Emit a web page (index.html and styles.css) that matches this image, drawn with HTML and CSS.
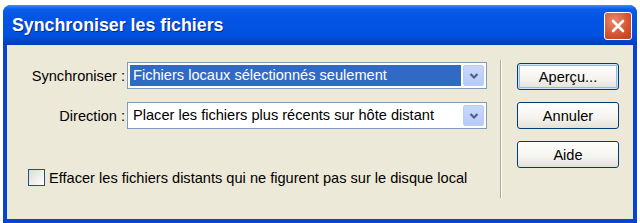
FILE: index.html
```html
<!DOCTYPE html>
<html lang="fr">
<head>
<meta charset="UTF-8" />
<title>Synchroniser les fichiers</title>
<link rel="stylesheet" href="styles.css">
</head>
<body>

<div class="window">
  <div class="titlebar">
    <span class="title">Synchroniser les fichiers</span>
    <button class="close" aria-label="Fermer">
      <svg width="16" height="16" viewBox="0 0 16 16">
        <path d="M3 3 L13 13 M13 3 L3 13" stroke="#fff" stroke-width="2.6" stroke-linecap="round" fill="none"/>
      </svg>
    </button>
  </div>

  <div class="content">
    <div class="form">
      <div class="row">
        <label class="lbl">Synchroniser :</label>
        <div class="combo">
          <span class="value selected">Fichiers locaux sélectionnés seulement</span>
          <span class="drop">
            <svg width="10" height="8" viewBox="0 0 10 8"><path d="M1.5 2 L5 5.5 L8.5 2" stroke="#4d6185" stroke-width="2.2" fill="none"/></svg>
          </span>
        </div>
      </div>
      <div class="row">
        <label class="lbl">Direction :</label>
        <div class="combo">
          <span class="value">Placer les fichiers plus récents sur hôte distant</span>
          <span class="drop">
            <svg width="10" height="8" viewBox="0 0 10 8"><path d="M1.5 2 L5 5.5 L8.5 2" stroke="#4d6185" stroke-width="2.2" fill="none"/></svg>
          </span>
        </div>
      </div>
      <div class="check">
        <span class="box"></span>
        <span>Effacer les fichiers distants qui ne figurent pas sur le disque local</span>
      </div>
    </div>

    <div class="sep"></div>

    <div class="buttons">
      <button class="btn default">Aperçu...</button>
      <button class="btn">Annuler</button>
      <button class="btn">Aide</button>
    </div>
  </div>
</div>

</body>
</html>
```

FILE: styles.css
```css
* {
  margin: 0; padding: 0; box-sizing: border-box;
}
body {
  background: #fff;
  font-family: 'Liberation Sans', Arial, sans-serif;
  font-size: 14.6px;
  color: #000;
  padding: 5px 0 0 3px;
}
.window {
  width: 634px;
  height: 218px;
  background: #0842d6;
  border-radius: 8px 8px 0 0;
  display: flex;
  flex-direction: column;
}
.titlebar {
  height: 40px;
  border-radius: 8px 8px 0 0;
  background: linear-gradient(to bottom, #3a8cf6 0px, #0a5de8 4px, #0355e6 12px, #0152e0 30px, #0044c8 37px, #003bb4 40px);
  display: flex;
  align-items: center;
  justify-content: space-between;
  padding: 0 5px 0 9px;
}
.title {
  color: #fff;
  font-weight: 700;
  font-size: 17.8px;
  text-shadow: 1px 1px 0 #0b2a8a;
  margin-top: 1px;
}
.close {
  width: 28px;
  height: 28px;
  border: 1px solid #fff;
  border-radius: 3px;
  background: radial-gradient(circle at 35% 30%, #e78a6c, #d5512e 60%, #c23d1c);
  display: flex;
  align-items: center;
  justify-content: center;
  margin-top: 2px;
}
.content {
  flex: 1;
  margin: 0 4px 4px 4px;
  background: #ece9d8;
  display: flex;
  padding: 15px 14px 20px 0;
}
.form {
  width: 493px;
  display: flex;
  flex-direction: column;
  padding-top: 2px;
}
.row {
  display: flex;
  align-items: center;
  margin-bottom: 13px;
}
.lbl {
  width: 118px;
  text-align: right;
  margin-right: 2px;
  white-space: nowrap;
}
.combo {
  width: 360px;
  height: 27px;
  background: #fff;
  border: 1px solid #7f9db9;
  display: flex;
  align-items: stretch;
  padding: 2px;
}
.value {
  flex: 1;
  padding: 0 3px;
  line-height: 21px;
  white-space: nowrap;
}
.value.selected {
  background: #316ac5;
  color: #fff;
  margin-right: 2px;
}
.drop {
  width: 21px;
  background: linear-gradient(to bottom, #c8d8fc, #b6cbf8);
  border: 1px solid #bccdf5;
  border-radius: 2px;
  display: flex;
  align-items: center;
  justify-content: center;
}
.check {
  display: flex;
  align-items: center;
  margin-top: 27px;
  margin-left: 21px;
  white-space: nowrap;
}
.box {
  width: 17px;
  height: 17px;
  border: 1px solid #1c5180;
  background: linear-gradient(135deg, #dcdbd4, #fff);
  margin-right: 4px;
  flex-shrink: 0;
}
.sep {
  width: 2px;
  height: 138px;
  border-left: 1px solid #aca899;
  border-right: 1px solid #fff;
}
.buttons {
  display: flex;
  flex-direction: column;
  margin-left: 15px;
  padding-top: 3px;
}
.btn {
  width: 102px;
  height: 27px;
  border: 1px solid #003c74;
  border-radius: 3px;
  background: linear-gradient(to bottom, #fff, #f4f3ee 60%, #e3e1d6);
  font-family: 'Liberation Sans', Arial, sans-serif;
  font-size: 14.6px;
  color: #000;
  margin-bottom: 12px;
}
.btn.default {
  box-shadow: inset 0 0 0 1px #cee7ff, inset 0 0 0 2px #98b8ea;
}
```
